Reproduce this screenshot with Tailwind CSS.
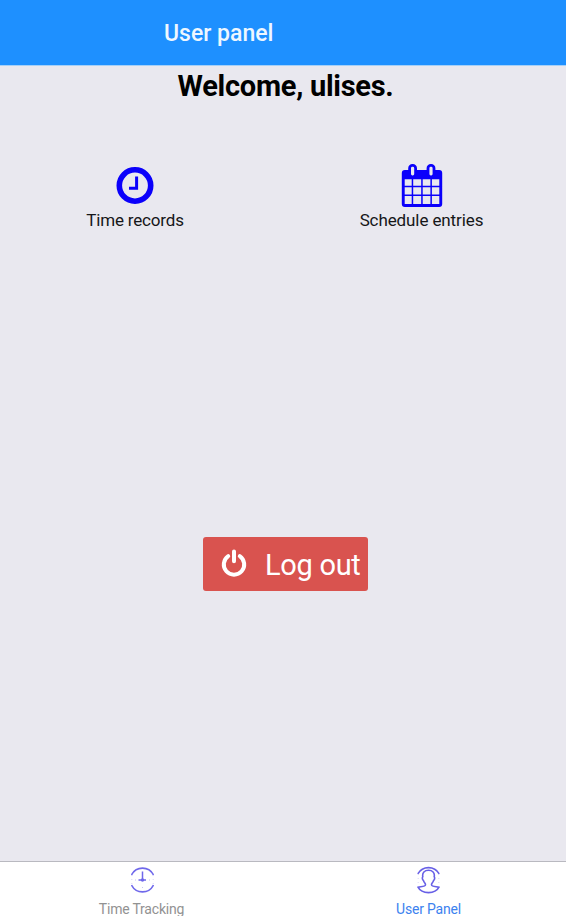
<!DOCTYPE html>
<html lang="en">
<head>
<meta charset="utf-8">
<title>User panel</title>
<script src="https://cdn.jsdelivr.net/npm/@tailwindcss/browser@4"></script>
</head>
<body class="flex h-[916px] w-[566px] flex-col overflow-hidden bg-[#e9e8ef] font-[Roboto,sans-serif] text-black">
<header class="h-[66px] shrink-0 border-b border-[#a5d0f8] bg-[#1e90ff] pt-[18px] pl-[164px]">
  <h1 class="text-[23px] leading-8 font-medium whitespace-nowrap text-[#eef7ff]">User panel</h1>
</header>
<main class="flex min-h-0 flex-1 flex-col">
  <h2 class="pl-[5px] text-center text-[29px] leading-10 font-bold tracking-[-0.27px] whitespace-nowrap">Welcome, ulises.</h2>
  <section class="mt-[56px] grid grid-cols-2">
    <div class="flex flex-col items-center pr-[13px]">
      <svg class="h-[46px] w-[40px]" viewBox="0 0 40 46" fill="none" stroke="#0b00fb">
        <circle cx="20" cy="23.5" r="15.7" stroke-width="5.6"/>
        <path d="M21.6 14.5V26.2H14" stroke-width="3"/>
      </svg>
      <p class="text-[17px] leading-6 tracking-[-0.17px] whitespace-nowrap text-[#161618]">Time records</p>
    </div>
    <div class="flex flex-col items-center pr-[6px]">
      <svg class="h-[46px] w-[42px]" viewBox="0 0 42 46">
        <path fill="#0b00fb" fill-rule="evenodd" d="M3.8 8H38.2Q41.2 8 41.2 11V42Q41.2 45 38.2 45H3.8Q.8 45 .8 42V11Q.8 8 3.8 8ZM3.7 17.2V23.7H10.7V17.2ZM12.2 17.2V23.7H20.2V17.2ZM21.7 17.2V23.7H29.4V17.2ZM30.9 17.2V23.7H38.3V17.2ZM3.7 25.2V32.5H10.7V25.2ZM12.2 25.2V32.5H20.2V25.2ZM21.7 25.2V32.5H29.4V25.2ZM30.9 25.2V32.5H38.3V25.2ZM3.7 34V42H10.7V34ZM12.2 34V42H20.2V34ZM21.7 34V42H29.4V34ZM30.9 34V42H38.3V34Z"/>
        <g fill="#e9e8ef" stroke="#0b00fb" stroke-width="2.8">
          <rect x="8.6" y="3.4" width="6" height="11.4" rx="2.8"/>
          <rect x="27" y="3.4" width="6" height="11.4" rx="2.8"/>
        </g>
      </svg>
      <p class="text-[17px] leading-6 tracking-[-0.1px] whitespace-nowrap text-[#161618]">Schedule entries</p>
    </div>
  </section>
  <button class="mt-[304.5px] ml-[202.5px] flex h-[54px] w-[165px] items-center rounded-[3px] bg-[#d9534f] pl-[18.5px] text-white">
    <svg class="h-[30px] w-[26px] shrink-0" viewBox="0 0 26 30" fill="none" stroke="currentColor" stroke-width="4" stroke-linecap="round">
      <path d="M7.2 7.1A10.2 10.2 0 1 0 18.8 7.1M13 2.6V12.2"/>
    </svg>
    <span class="ml-[18px] pt-[2px] text-[29px] leading-8 tracking-[-0.3px] whitespace-nowrap">Log out</span>
  </button>
</main>
<nav class="grid h-[55px] shrink-0 grid-cols-2 border-t border-[#b9b9c0] bg-white text-[14px] leading-5 tracking-[-0.2px]">
  <div class="flex flex-col items-center pt-[3px] text-[#929292]">
    <svg class="h-[30px] w-[23px] translate-x-px" viewBox="0 0 23 30" fill="none" stroke="#6f68eb">
      <path d="M.5 10A12.4 12.8 0 0 1 22.5 10M.5 20A12.4 12.8 0 0 0 22.5 20" stroke-width="1.6"/>
      <path d="M.8 10V20M22.2 10V20" stroke-width=".8" stroke-dasharray="1 3" opacity=".35"/>
      <path d="M11.5 6.5V16M7.5 15H15" stroke-width="1.5"/>
      <circle cx="11.5" cy="15" r="1.7" fill="#6f68eb" stroke="none"/>
      <path d="M4 15H5M18 15H19M11.5 22V23" opacity=".4"/>
    </svg>
    <span class="mt-[4px] whitespace-nowrap">Time Tracking</span>
  </div>
  <div class="flex flex-col items-center pt-[3px] pl-[8px] text-[#3c82ef]">
    <svg class="h-[30px] w-[23px]" viewBox="0 0 23 30" fill="none" stroke="#6860e6" stroke-width="1.6">
      <path d="M.8 8.8A12.6 13 0 0 1 22.2 8.8"/>
      <path d="M1 22.2C3.5 21.5 8.4 22 8.5 19.8C8.6 18.2 6.8 17.6 6.4 15.4C5.2 14.7 5.1 12.5 5.8 11.8C5 7.5 7.6 5.3 11.5 5.3S18 7.5 17.2 11.8C17.9 12.5 17.8 14.7 16.6 15.4C16.2 17.6 14.4 18.2 14.5 19.8C14.6 22 19.5 21.5 22 22.2C20 26 15.5 27.6 11.5 27.6S3 26 1 22.2Z"/>
      <path d="M1.2 9V21M21.8 9V21" stroke-width=".8" stroke-dasharray="1 3" opacity=".3"/>
    </svg>
    <span class="mt-[4px] whitespace-nowrap">User Panel</span>
  </div>
</nav>
</body>
</html>
